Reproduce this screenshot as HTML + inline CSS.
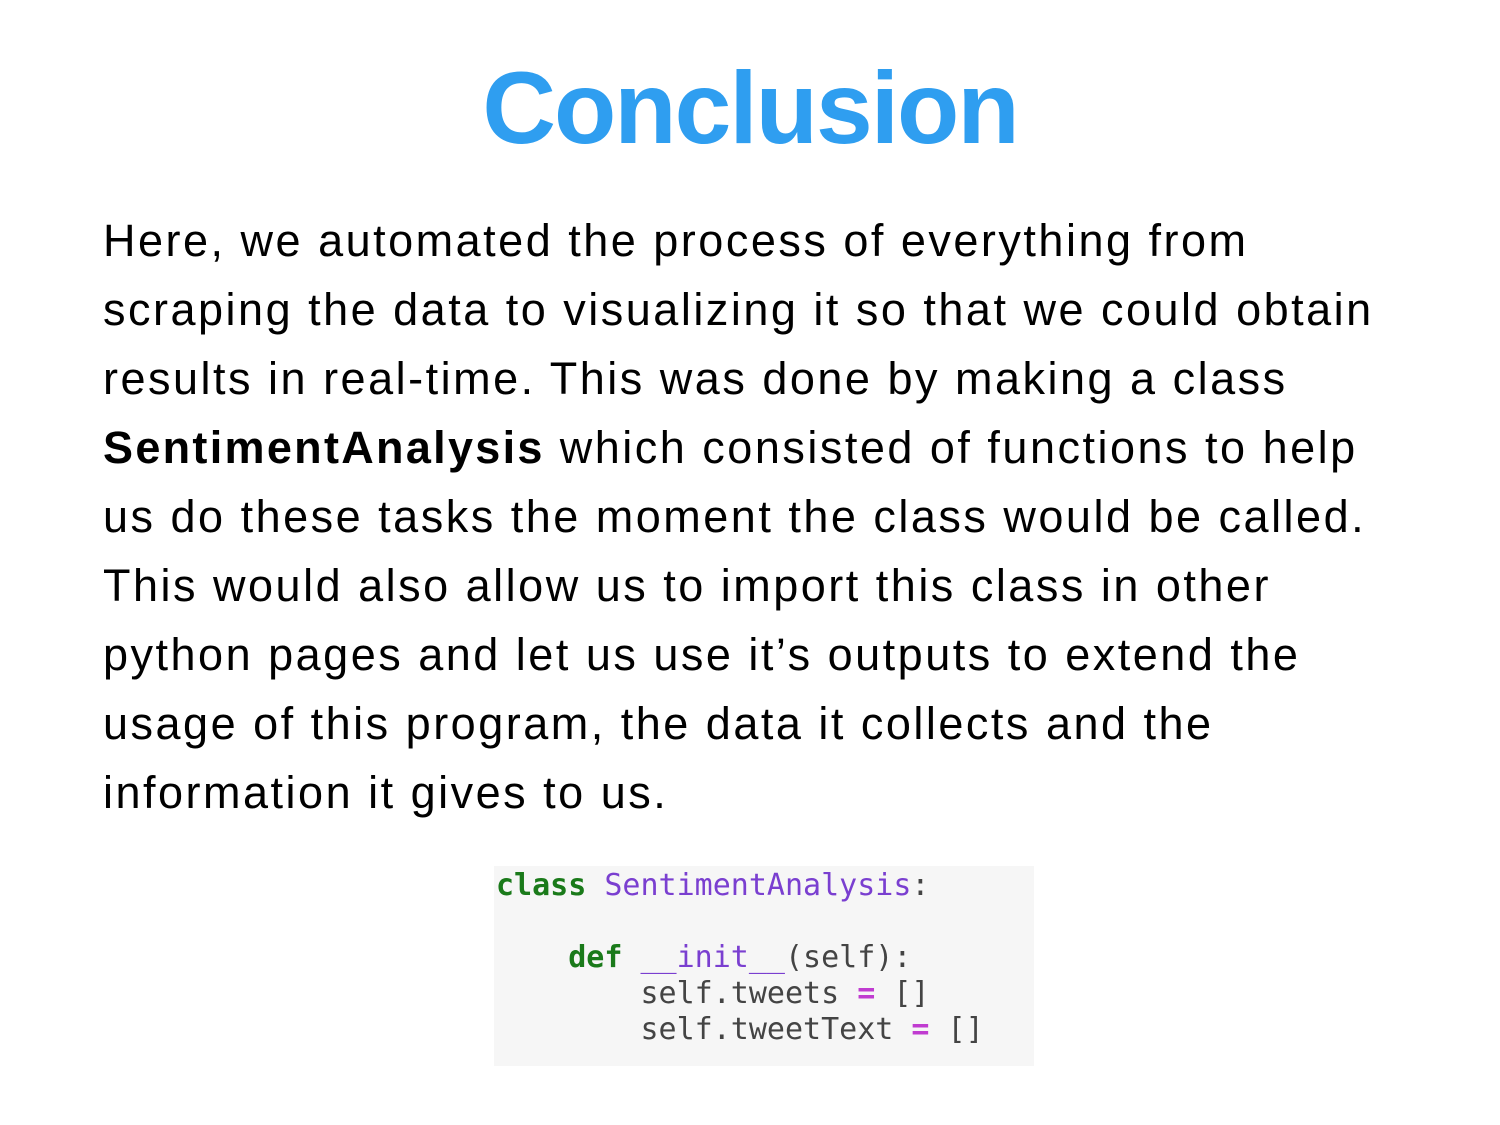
<!DOCTYPE html>
<html><head><meta charset="utf-8"><style>
html,body{margin:0;padding:0;background:#fff;width:1500px;height:1125px;overflow:hidden}
.t{position:absolute;left:0;width:1500px;top:57px;text-align:center;font:bold 102px/102px "Liberation Sans",sans-serif;color:#2f9ef0;letter-spacing:-2px}
.b{position:absolute;left:103px;top:206px;font:45px/69px "Liberation Sans",sans-serif;color:#000;white-space:nowrap;letter-spacing:2.5px}
.b b{letter-spacing:2.3px}
.code{position:absolute;left:494px;top:866px;width:540px;height:200px;background:#f6f6f6}
.code pre{margin:0;position:absolute;left:2px;top:2px;font:30px/36px "DejaVu Sans Mono","Liberation Mono",monospace;color:#444}
.k{color:#1a7a1a;font-weight:bold}.c{color:#7a3fd0}.m{color:#7a3fd0}.o{color:#c03cd0;font-weight:bold}
</style></head><body>
<div class="t">Conclusion</div>
<div class="b">Here, we automated the process of everything from<br>scraping the data to visualizing it so that we could obtain<br>results in real-time. This was done by making a class<br><b>SentimentAnalysis</b> which consisted of functions to help<br>us do these tasks the moment the class would be called.<br>This would also allow us to import this class in other<br>python pages and let us use it’s outputs to extend the<br>usage of this program, the data it collects and the<br>information it gives to us.</div>
<div class="code"><pre><span class="k">class</span> <span class="c">SentimentAnalysis</span>:

    <span class="k">def</span> <span class="m">__init__</span>(self):
        self.tweets <span class="o">=</span> []
        self.tweetText <span class="o">=</span> []</pre></div>
</body></html>
